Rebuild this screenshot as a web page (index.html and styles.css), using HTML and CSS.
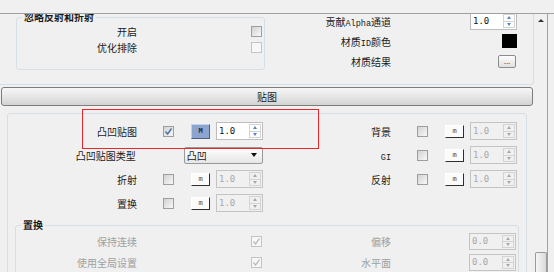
FILE: index.html
```html
<!doctype html>
<html>
<head>
    <meta charset="utf-8">
    <link rel="stylesheet" href="styles.css">
</head>
<body>
    <div class="titlebar"></div>
    <div class="main">
        <div class="viewport">
            <div class="scroller">
                <div class="general">
                    <div class="group ignore">
                        <div class="group-title">忽略反射和折射</div>
                        <div class="srow"><span class="lbl">开启</span><span class="chk"></span></div>
                        <div class="srow"><span class="lbl">优化排除</span><span class="chk dis"></span></div>
                    </div>
                    <div class="gen-right">
                        <div class="prow">
                            <span class="lbl">贡献<span class="lat">Alpha</span>通道</span>
                            <span class="ctl"><span class="spin"><span class="val">1.0</span><span class="arrows"><span class="up"></span><span class="dn"></span></span></span></span>
                        </div>
                        <div class="prow">
                            <span class="lbl">材质<span class="lat">ID</span>颜色</span>
                            <span class="ctl"><span class="swatch"></span></span>
                        </div>
                        <div class="prow">
                            <span class="lbl">材质结果</span>
                            <span class="ctl"><span class="dots">...</span></span>
                        </div>
                    </div>
                </div>

                <div class="rollout">贴图</div>

                <div class="group maps">
                    <div class="mrow">
                        <div class="half-l">
                            <span class="lbl">凸凹贴图</span>
                            <span class="chk"><svg viewBox="0 0 9 9"><path d="M1.5 4.5 L3.6 7 L7.5 1.5" fill="none" stroke="#4d6fa8" stroke-width="1.4"/></svg></span>
                            <span class="mbtn on">M</span>
                            <span class="spin"><span class="val">1.0</span><span class="arrows"><span class="up"></span><span class="dn"></span></span></span>
                        </div>
                        <div class="half-r">
                            <span class="lbl">背景</span>
                            <span class="chk"></span>
                            <span class="mbtn">m</span>
                            <span class="spin dis"><span class="val">1.0</span><span class="arrows"><span class="up"></span><span class="dn"></span></span></span>
                        </div>
                    </div>
                    <div class="mrow">
                        <div class="half-l">
                            <span class="lbl">凸凹贴图类型</span>
                            <span class="combo"><span class="combo-val">凸凹</span></span>
                        </div>
                        <div class="half-r">
                            <span class="lbl"><span class="lat">GI</span></span>
                            <span class="chk"></span>
                            <span class="mbtn">m</span>
                            <span class="spin dis"><span class="val">1.0</span><span class="arrows"><span class="up"></span><span class="dn"></span></span></span>
                        </div>
                    </div>
                    <div class="mrow">
                        <div class="half-l">
                            <span class="lbl">折射</span>
                            <span class="chk"></span>
                            <span class="mbtn">m</span>
                            <span class="spin dis"><span class="val">1.0</span><span class="arrows"><span class="up"></span><span class="dn"></span></span></span>
                        </div>
                        <div class="half-r">
                            <span class="lbl">反射</span>
                            <span class="chk"></span>
                            <span class="mbtn">m</span>
                            <span class="spin dis"><span class="val">1.0</span><span class="arrows"><span class="up"></span><span class="dn"></span></span></span>
                        </div>
                    </div>
                    <div class="mrow">
                        <div class="half-l">
                            <span class="lbl">置换</span>
                            <span class="chk"></span>
                            <span class="mbtn">m</span>
                            <span class="spin dis"><span class="val">1.0</span><span class="arrows"><span class="up"></span><span class="dn"></span></span></span>
                        </div>
                    </div>

                    <div class="group disp">
                        <div class="group-title">置换</div>
                        <div class="drow">
                            <div class="half-l">
                                <span class="lbl">保持连续</span>
                                <span class="chk dis"><svg viewBox="0 0 9 9"><path d="M1.5 4.5 L3.6 7 L7.5 1.5" fill="none" stroke="#b4b4b4" stroke-width="1.2"/></svg></span>
                            </div>
                            <div class="half-r">
                                <span class="lbl">偏移</span>
                                <span class="spin dis"><span class="val">0.0</span><span class="arrows"><span class="up"></span><span class="dn"></span></span></span>
                            </div>
                        </div>
                        <div class="drow">
                            <div class="half-l">
                                <span class="lbl">使用全局设置</span>
                                <span class="chk dis"><svg viewBox="0 0 9 9"><path d="M1.5 4.5 L3.6 7 L7.5 1.5" fill="none" stroke="#b4b4b4" stroke-width="1.2"/></svg></span>
                            </div>
                            <div class="half-r">
                                <span class="lbl">水平面</span>
                                <span class="spin dis"><span class="val">0.0</span><span class="arrows"><span class="up"></span><span class="dn"></span></span></span>
                            </div>
                        </div>
                    </div>
                </div>
            </div>
        </div>
        <div class="scrollbar">
            <span class="sb-up"></span>
            <div class="sb-thumb"></div>
        </div>
    </div>
    <div class="highlight"></div>
</body>
</html>
```

FILE: styles.css
```css
body {
    margin: 0;
    width: 554px;
    height: 272px;
    overflow: hidden;
    background: #f0f0f0;
    font-family: "Noto Sans CJK SC", sans-serif;
    font-size: 10px;
    color: #1a1a1a;
}
.titlebar {
    height: 13px;
    border-bottom: 1px solid #a0a0a0;
}
.main {
    display: flex;
    height: 258px;
}
.viewport {
    width: 535px;
    overflow: hidden;
}
.scroller {
    margin-top: -10px;
}
.lbl {
    white-space: nowrap;
    text-align: right;
}
.lat {
    font-family: "Liberation Mono", monospace;
    font-size: 8.5px;
}

/* group boxes */
.group {
    box-sizing: border-box;
    border: 1px solid #d5dfe5;
    border-radius: 3px;
}
.group-title {
    width: fit-content;
    margin: -8px 0 -1px 5px;
    padding: 0 2px;
    line-height: 14px;
    background: #f0f0f0;
    font-weight: bold;
}
.general {
    width: 534px;
    box-sizing: border-box;
    padding-left: 1px;
    border: 1px solid #d5dfe5;
    border-left: none;
    border-radius: 0 3px 3px 0;
    display: flex;
    align-items: flex-start;
}
.ignore {
    width: 249px;
    margin: 12px 0 14px 15px;
    padding-bottom: 14px;
}
.srow {
    display: flex;
    align-items: center;
    height: 16px;
}
.srow .lbl {
    width: 120px;
}
.srow .chk {
    margin-left: 114px;
}
.gen-right {
    margin-top: 6px;
}
.prow {
    display: flex;
    align-items: center;
    height: 20px;
}
.prow .lbl {
    width: 126px;
}
.prow .ctl {
    width: 126px;
    display: flex;
    justify-content: flex-end;
}
.swatch {
    width: 15px;
    height: 14px;
    background: #000;
}
.dots {
    width: 18px;
    height: 13px;
    margin-right: 1px;
    box-sizing: border-box;
    border: 1px solid #8c8c8c;
    border-radius: 2px;
    background: linear-gradient(#fdfdfd, #e0e0e0);
    font-size: 8px;
    line-height: 9px;
    text-align: center;
    color: #555;
}

/* rollout header */
.rollout {
    margin: 2px 0 0 1px;
    width: 532px;
    height: 19px;
    box-sizing: border-box;
    border: 1px solid #7c7c7c;
    border-radius: 3px;
    background: linear-gradient(#f6f6f6, #e8e8e8 45%, #d3d3d3);
    text-align: center;
    line-height: 17px;
}

/* maps */
.maps {
    margin: 7px 0 0 7px;
    width: 520px;
    padding-top: 5px;
    height: 200px;
}
.mrow {
    display: flex;
    align-items: center;
    height: 24px;
}
.half-l,
.half-r {
    display: flex;
    align-items: center;
}
.mrow .half-l {
    width: 255px;
}
.mrow .half-l .lbl {
    width: 129px;
}
.mrow .half-r .lbl {
    width: 128px;
}
.mrow .chk {
    margin-left: 26px;
}
.mrow .mbtn {
    margin-left: 17px;
}
.mrow .spin {
    margin-left: 6px;
}
.chk {
    width: 11px;
    height: 11px;
    box-sizing: border-box;
    border: 1px solid #9e9e9e;
    background: linear-gradient(135deg, #d2d2d2, #f8f8f8);
    display: flex;
    align-items: center;
    justify-content: center;
}
.chk svg {
    width: 9px;
    height: 9px;
}
.chk.dis {
    border-color: #c4c4c4;
    background: #f7f7f7;
}
.mbtn {
    width: 19px;
    height: 13px;
    box-sizing: border-box;
    border: 1px solid;
    border-color: #fff #2e2e2e #2e2e2e #fff;
    background: #fbfbfb;
    font-family: "DejaVu Sans Mono", monospace;
    font-size: 7px;
    line-height: 11px;
    text-align: center;
    color: #444;
}
.mbtn.on {
    height: 15px;
    line-height: 13px;
    border-color: #c2d0e8 #4b5f87 #4b5f87 #c2d0e8;
    background: #8ca4ce;
    color: #1c2b4a;
    font-weight: bold;
}
.spin {
    width: 47px;
    height: 18px;
    box-sizing: border-box;
    border: 1px solid #bdbdbd;
    background: #fff;
    display: flex;
}
.spin .val {
    flex: 1;
    padding-left: 2px;
    font-family: "DejaVu Sans Mono", monospace;
    font-size: 9px;
    line-height: 16px;
    color: #111;
}
.arrows {
    width: 10px;
    margin: 1px;
    border: 1px solid #d4d4d4;
    display: flex;
    flex-direction: column;
}
.arrows span {
    flex: 1;
    display: flex;
    align-items: center;
    justify-content: center;
}
.arrows .up {
    border-bottom: 1px solid #d4d4d4;
}
.arrows span::before {
    content: "";
    border-left: 2px solid transparent;
    border-right: 2px solid transparent;
}
.arrows .up::before {
    border-bottom: 3px solid #5a80c6;
}
.arrows .dn::before {
    border-top: 3px solid #5a80c6;
}
.spin.dis {
    background: #f0f0f0;
    border-color: #c4c4c4;
}
.spin.dis .val {
    color: #a8a8a8;
}
.spin.dis .up::before {
    border-bottom-color: #a8a8a8;
}
.spin.dis .dn::before {
    border-top-color: #a8a8a8;
}
.combo {
    margin-left: 48px;
    width: 80px;
    height: 17px;
    box-sizing: border-box;
    padding-left: 2px;
    border: 1px solid #9a9a9a;
    border-radius: 2px;
    background: linear-gradient(#fefefe, #e6e6e6);
    display: flex;
    align-items: center;
}
.combo-val {
    flex: 1;
}
.combo::after {
    content: "";
    margin-right: 5px;
    border-left: 3px solid transparent;
    border-right: 3px solid transparent;
    border-top: 4px solid #111;
}

/* displacement */
.disp {
    margin: 10px 7px 0 7px;
    height: 80px;
}
.drow {
    display: flex;
    align-items: center;
    height: 21px;
}
.drow .lbl {
    color: #a0a0a0;
}
.drow .half-l {
    width: 248px;
}
.drow .half-l .lbl {
    width: 121px;
}
.drow .chk {
    margin-left: 114px;
}
.drow .half-r .lbl {
    width: 127px;
}
.drow .spin {
    margin-left: 78px;
    height: 17px;
}
.drow .spin .val {
    line-height: 15px;
}

/* scrollbar */
.scrollbar {
    width: 12px;
    border-right: 1px solid #a0a0a0;
    display: flex;
    flex-direction: column;
    align-items: center;
}
.sb-up {
    margin-top: 5px;
    border-left: 3px solid transparent;
    border-right: 3px solid transparent;
    border-bottom: 3px solid #333;
}
.sb-thumb {
    margin-top: auto;
    width: 12px;
    height: 20px;
    box-sizing: border-box;
    border: 1px solid #9a9a9a;
    border-bottom: none;
    border-radius: 2px 2px 0 0;
    background: linear-gradient(90deg, #f6f6f6, #dadada);
}

/* annotation */
.highlight {
    position: absolute;
    left: 82px;
    top: 109px;
    width: 237px;
    height: 40px;
    box-sizing: border-box;
    border: 1px solid #e8262c;
}
```
